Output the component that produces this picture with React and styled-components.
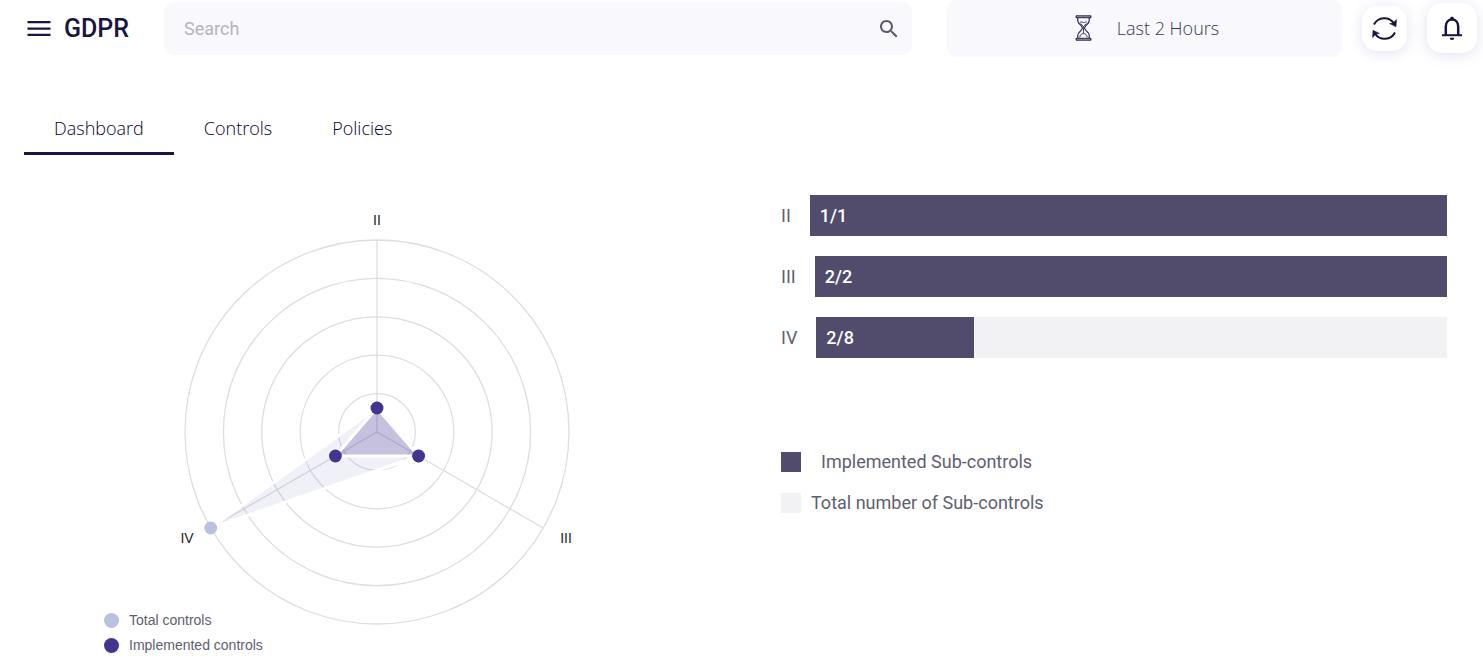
import React from 'react';
import styled, { createGlobalStyle } from 'styled-components';

const GlobalStyle = createGlobalStyle`
  * {
    box-sizing: border-box;
  }
  body {
    margin: 0;
    background: #fff;
    color: #605e70;
    font-family: Roboto, 'Liberation Sans', sans-serif;
    font-size: 18px;
  }
`;

const navy = '#1a1440';
const purple = '#514b6c';
const track = '#f2f2f5';

const Header = styled.header`
  display: grid;
  grid-template-columns: 140px minmax(0, 783fr) minmax(0, 415fr) auto auto;
  align-items: start;
  padding: 0 6px 0 24px;
`;

const Brand = styled.div`
  display: flex;
  align-items: center;
  gap: 13px;
  height: 57px;
`;

const MenuButton = styled.button`
  display: flex;
  padding: 0 0 0 3px;
  border: none;
  background: none;
  cursor: pointer;
`;

const Title = styled.h1`
  margin: 0;
  color: ${navy};
  font-size: 25px;
  font-weight: 500;
  line-height: 32px;
`;

const SearchBox = styled.form`
  display: flex;
  align-items: center;
  height: 53px;
  margin: 2px 35px 0 0;
  padding: 0 11px 0 20px;
  border-radius: 10px;
  background: #f8f8fd;

  input {
    flex: 1;
    min-width: 0;
    padding: 0;
    border: none;
    outline: none;
    background: none;
    color: ${navy};
    font-family: inherit;
    font-size: 18px;
  }
  input::placeholder {
    color: #b5b5ba;
    opacity: 1;
  }
  button {
    display: flex;
    padding: 0;
    border: none;
    background: none;
    cursor: pointer;
  }
`;

const RangeButton = styled.button`
  display: flex;
  align-items: center;
  justify-content: center;
  gap: 25px;
  height: 57px;
  margin-right: 20px;
  padding: 0 0 2px 5px;
  border: none;
  border-radius: 10px;
  background: #f8f8fd;
  color: #3a3650;
  font-family: 'Open Sans', sans-serif;
  font-size: 18px;
  font-weight: 300;
  cursor: pointer;
`;

const IconButton = styled.button`
  display: flex;
  align-items: center;
  justify-content: center;
  width: ${({ $size }) => $size}px;
  height: ${({ $size }) => $size}px;
  margin-top: ${({ $top }) => $top}px;
  padding: 0;
  border: none;
  border-radius: 15px;
  background: #fff;
  box-shadow: 0 2px 14px rgba(80, 70, 180, 0.16);
  cursor: pointer;

  & + & {
    margin-left: 20px;
  }
`;

const Tabs = styled.nav`
  display: flex;
  margin-top: 45px;
  padding: 0 24px;
`;

const Tab = styled.a`
  padding: 14px 30px 11px;
  border-bottom: 3px solid ${({ $active }) => ($active ? navy : 'transparent')};
  color: #06002c;
  font-family: 'Open Sans', sans-serif;
  font-size: 18px;
  font-weight: 300;
  line-height: 25px;
  text-decoration: none;
`;

const Panels = styled.main`
  display: grid;
  grid-template-columns: minmax(0, 757fr) minmax(0, 726fr);
`;

const ChartPanel = styled.section`
  padding: 45px 0 0 104px;

  svg {
    display: block;
    width: 546px;
    max-width: 100%;
  }
  text {
    fill: #222;
    font-family: 'Liberation Sans', Arial, sans-serif;
    font-size: 14px;
  }
`;

const ChartLegend = styled.ul`
  display: flex;
  flex-direction: column;
  gap: 5px;
  margin: -20px 0 0;
  padding: 0;
  list-style: none;

  li {
    display: flex;
    align-items: center;
    gap: 10px;
    font-family: 'Liberation Sans', Arial, sans-serif;
    font-size: 14px;
    line-height: 20px;
  }
`;

const Dot = styled.span`
  width: 15px;
  height: 15px;
  border-radius: 50%;
  background: ${({ $color }) => $color};
`;

const BarsPanel = styled.section`
  padding: 40px 36px 0 24px;
`;

const BarRow = styled.div`
  display: flex;
  align-items: center;
  gap: 19px;
  margin-bottom: 20px;
`;

const Bar = styled.div`
  flex: 1;
  background: ${track};
`;

const BarFill = styled.div`
  padding-left: 10px;
  background: ${purple};
  color: #fff;
  font-weight: 500;
  line-height: 41px;
`;

const BarsLegend = styled.ul`
  display: flex;
  flex-direction: column;
  gap: 20px;
  margin: 93px 0 0;
  padding: 0;
  list-style: none;

  li {
    display: flex;
    align-items: center;
    line-height: 21px;
  }
`;

const Swatch = styled.span`
  width: 20px;
  height: 20px;
  margin-right: ${({ $gap }) => $gap}px;
  background: ${({ $color }) => $color};
`;

const chapters = [
  { name: 'II', done: 1, total: 1 },
  { name: 'III', done: 2, total: 2 },
  { name: 'IV', done: 2, total: 8 }
];

const CX = 273;
const CY = 232;
const RADIUS = 192;
const MAX = 8;

const point = (value, index) => {
  const angle = (index * 2 * Math.PI) / chapters.length - Math.PI / 2;
  const r = (value / MAX) * RADIUS;
  return [CX + r * Math.cos(angle), CY + r * Math.sin(angle)];
};

const series = [
  { key: 'total', color: '#b9c0e0', fill: '#3c3ca8', opacity: 0.08 },
  { key: 'done', color: '#43348f', fill: '#43348f', opacity: 0.25 }
];

const RadarChart = () => (
  <svg viewBox="0 0 546 430" role="img" aria-label="Controls by chapter">
    <g fill="none" stroke="#dedede" strokeWidth="1.3">
      {[1, 2, 3, 4, 5].map(n => (
        <circle key={n} cx={CX} cy={CY} r={(RADIUS / 5) * n} />
      ))}
      {chapters.map((chapter, i) => {
        const [x, y] = point(MAX, i);
        return <line key={chapter.name} x1={CX} y1={CY} x2={x} y2={y} />;
      })}
    </g>
    {series.map(({ key, fill, opacity }) => (
      <polygon
        key={key}
        points={chapters.map((c, i) => point(c[key], i).join()).join(' ')}
        fill={fill}
        fillOpacity={opacity}
        stroke="#fff"
        strokeWidth="3"
      />
    ))}
    {series.map(({ key, color }) =>
      chapters.map((c, i) => {
        const [x, y] = point(c[key], i);
        return <circle key={key + c.name} cx={x} cy={y} r="6.4" fill={color} />;
      })
    )}
    <text x="273" y="25" textAnchor="middle">
      II
    </text>
    <text x="462" y="343" textAnchor="middle">
      III
    </text>
    <text x="83" y="343" textAnchor="middle">
      IV
    </text>
  </svg>
);

const App = () => (
  <>
    <GlobalStyle />
    <Header>
      <Brand>
        <MenuButton aria-label="Menu">
          <svg width="24" height="18" viewBox="0 0 24 18" fill={navy}>
            <path d="M0.5 1h23v2.3h-23zM0.5 7.5h23v2.3h-23zM0.5 13.7h23v2.3h-23z" />
          </svg>
        </MenuButton>
        <Title>GDPR</Title>
      </Brand>
      <SearchBox onSubmit={e => e.preventDefault()}>
        <input type="text" placeholder="Search" aria-label="Search" />
        <button aria-label="Submit search">
          <svg width="24" height="24" viewBox="0 0 24 24" fill="#5b5872">
            <path d="M15.5 14h-.79l-.28-.27C15.41 12.59 16 11.11 16 9.5 16 5.91 13.09 3 9.5 3S3 5.91 3 9.5 5.91 16 9.5 16c1.61 0 3.09-.59 4.23-1.57l.27.28v.79l5 4.99L20.49 19l-4.99-5zm-6 0C7.01 14 5 11.99 5 9.5S7.01 5 9.5 5 14 7.01 14 9.5 11.99 14 9.5 14z" />
          </svg>
        </button>
      </SearchBox>
      <RangeButton>
        <svg width="17" height="26" viewBox="0 0 17 26" fill="none" stroke={navy}>
          <path
            d="M1 .8h15v1.900H1zM1 23.300h15v1.900H1z"
            fill="#a5a2b8"
            strokeWidth="0.9"
          />
          <path
            d="M2.800 2.700v3c0 3.600 4.600 4.600 4.600 7.300S2.800 16.700 2.800 20.300v3M14.200 2.700v3c0 3.600-4.600 4.600-4.600 7.300s4.600 3.700 4.600 7.300v3"
            strokeWidth="1.1"
          />
          <path
            d="M4.800 7.500c2-1.700 3.200.8 4.700 0s2-.8 2.700-.2M5.700 8.500l2.800 3.300 2.800-3.300M8.500 12v6M4.800 22.500c0-2.500 1.700-4 3.700-4s3.700 1.500 3.700 4"
            strokeWidth="0.8"
          />
        </svg>
        Last 2 Hours
      </RangeButton>
      <IconButton $size={45} $top={6} aria-label="Refresh">
        <svg
          width="27"
          height="27"
          viewBox="0 0 27 27"
          fill="none"
          stroke={navy}
          strokeWidth="2"
        >
          <path d="M3 9.500A11.500 11.500 0 0 1 23 8.500M24 17.500A11.500 11.500 0 0 1 4 18.500" />
          <path
            d="M25.500 4.500l-.5 7.300-6.500-3.200 3.400-.7zM1.500 22.500l.5-7.300 6.500 3.200-3.400.7z"
            fill={navy}
            stroke={navy}
            strokeWidth="0.5"
            strokeLinejoin="round"
          />
        </svg>
      </IconButton>
      <IconButton $size={50} $top={3} aria-label="Notifications">
        <svg
          width="20"
          height="24"
          viewBox="0 0 20 24"
          fill="none"
          stroke={navy}
          strokeWidth="2.5"
        >
          <path d="M3.800 19v-8.500c0-4 2.500-7 6.200-7s6.200 3 6.200 7V19" />
          <path d="M0 19.200h20" strokeWidth="2" />
          <path
            d="M8 3a2 2.600 0 0 1 4 0zM7.600 21.800h4.800a2.400 2.200 0 0 1-4.800 0z"
            fill={navy}
            stroke="none"
          />
        </svg>
      </IconButton>
    </Header>
    <Tabs>
      <Tab href="#dashboard" $active>
        Dashboard
      </Tab>
      <Tab href="#controls">Controls</Tab>
      <Tab href="#policies">Policies</Tab>
    </Tabs>
    <Panels>
      <ChartPanel>
        <RadarChart />
        <ChartLegend>
          <li>
            <Dot $color="#b9c0e0" />
            Total controls
          </li>
          <li>
            <Dot $color="#43348f" />
            Implemented controls
          </li>
        </ChartLegend>
      </ChartPanel>
      <BarsPanel>
        {chapters.map(({ name, done, total }) => (
          <BarRow key={name}>
            <span>{name}</span>
            <Bar>
              <BarFill style={{ width: `${(done / total) * 100}%` }}>
                {done}/{total}
              </BarFill>
            </Bar>
          </BarRow>
        ))}
        <BarsLegend>
          <li>
            <Swatch $color={purple} $gap={20} />
            Implemented Sub-controls
          </li>
          <li>
            <Swatch $color={track} $gap={10} />
            Total number of Sub-controls
          </li>
        </BarsLegend>
      </BarsPanel>
    </Panels>
  </>
);

export default App;
